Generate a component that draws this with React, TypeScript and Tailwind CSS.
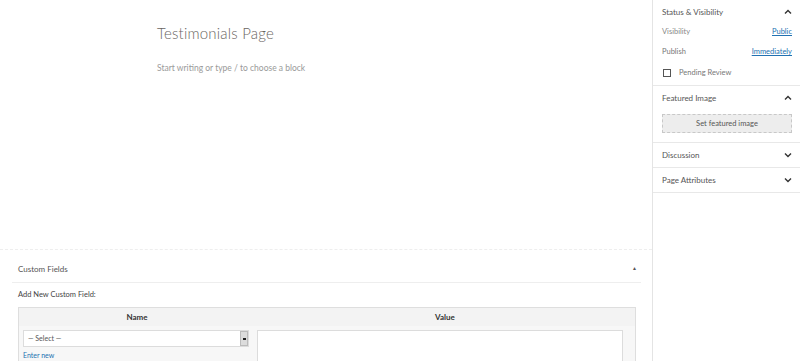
import React from 'react';

const ChevronUp = () => (
  <svg width="8" height="6" viewBox="0 0 8 6" className="text-[#333]">
    <path d="M1 4.5 L4 1.5 L7 4.5" fill="none" stroke="currentColor" strokeWidth="1.4" />
  </svg>
);

const ChevronDown = () => (
  <svg width="8" height="6" viewBox="0 0 8 6" className="text-[#333]">
    <path d="M1 1.5 L4 4.5 L7 1.5" fill="none" stroke="currentColor" strokeWidth="1.4" />
  </svg>
);

const PanelRow = ({ title }: { title: string }) => (
  <div className="h-[25px] shrink-0 flex items-center justify-between pl-[9px] pr-[8px] border-b border-[#e8e8e8]">
    <span className="text-[8px] text-[#555]">{title}</span>
    <ChevronDown />
  </div>
);

const App = () => {
  return (
    <div className="w-[800px] h-[361px] flex bg-white overflow-hidden" style={{ fontFamily: 'Lato, "Open Sans", sans-serif' }}>
      {/* Editor */}
      <div className="w-[652px] flex flex-col">
        <div className="h-[250px] shrink-0 pl-[157px] pt-[22px] border-b border-dashed border-[#eeeeee]">
          <h1 className="text-[15px] text-[#6a6561] font-light leading-[22px] tracking-[0.2px]">Testimonials Page</h1>
          <p className="mt-[18px] text-[8.5px] text-[#9a9a9a]">Start writing or type / to choose a block</p>
        </div>

        {/* Custom Fields */}
        <div className="shrink-0 pl-[12px] pr-[11px]">
          <div className="h-[33px] pt-[5px] flex items-center justify-between pl-[6px] pr-[4px] border-b border-[#eeeeee]">
            <span className="text-[8px] text-[#555]">Custom Fields</span>
            <span className="text-[5px] text-[#555]">▲</span>
          </div>
          <div className="pl-[6px] pt-[7px]">
            <div className="text-[7.5px] text-[#444] h-[17px] leading-[10px]">Add New Custom Field:</div>
            <div className="w-[618px] border border-[#dedede] bg-[#f3f3f3]">
              <div className="h-[18px] grid grid-cols-[236px_1fr] text-[8px] font-bold text-[#333]">
                <div className="flex items-center justify-center">Name</div>
                <div className="flex items-center justify-center">Value</div>
              </div>
              <div className="grid grid-cols-[236px_1fr] bg-[#f7f7f7] pt-[4px] h-[40px]">
                <div className="pl-[4px]">
                  <div className="h-[17px] w-[226px] bg-white border border-[#dcdcdc] flex items-center justify-between">
                    <span className="pl-[4px] text-[7px] text-[#555]">— Select —</span>
                    <div className="h-[15px] w-[8px] bg-[#dcdcdc] border border-[#bbb] flex items-center justify-center">
                      <div className="w-[3px] h-[2px] bg-[#222]" />
                    </div>
                  </div>
                  <div className="mt-[3px] text-[7px] text-[#2271b1]">Enter new</div>
                </div>
                <div className="pl-[2px] pr-[12px]">
                  <div className="h-[40px] bg-white border border-[#dcdcdc]" />
                </div>
              </div>
            </div>
          </div>
        </div>
      </div>

      {/* Sidebar */}
      <div className="w-[148px] border-l border-[#e4e4e4] flex flex-col">
        <div className="shrink-0 border-b border-[#e8e8e8] pl-[9px] pr-[8px] pt-[6px] pb-[6px]">
          <div className="flex items-center justify-between h-[12px]">
            <span className="text-[8px] text-[#555]">Status &amp; Visibility</span>
            <ChevronUp />
          </div>
          <div className="flex items-center justify-between mt-[8px] h-[12px] text-[7.5px]">
            <span className="text-[#888]">Visibility</span>
            <span className="text-[#2271b1] underline">Public</span>
          </div>
          <div className="flex items-center justify-between mt-[8px] h-[12px] text-[7.5px]">
            <span className="text-[#777]">Publish</span>
            <span className="text-[#2271b1] underline">Immediately</span>
          </div>
          <div className="flex items-center mt-[9px] h-[12px] text-[7.5px]">
            <div className="w-[8px] h-[8px] border border-[#555] ml-[1px]" />
            <span className="ml-[8px] text-[#777]">Pending Review</span>
          </div>
        </div>
        <div className="shrink-0 border-b border-[#e8e8e8] pl-[9px] pr-[8px] pt-[6px] pb-[9px]">
          <div className="flex items-center justify-between h-[12px]">
            <span className="text-[8px] text-[#555]">Featured Image</span>
            <ChevronUp />
          </div>
          <div className="mt-[10px] h-[19px] bg-[#ededed] border border-dashed border-[#c8c8c8] flex items-center justify-center">
            <span className="text-[7.5px] text-[#555]">Set featured image</span>
          </div>
        </div>
        <PanelRow title="Discussion" />
        <PanelRow title="Page Attributes" />
      </div>
    </div>
  );
};

export default App;
